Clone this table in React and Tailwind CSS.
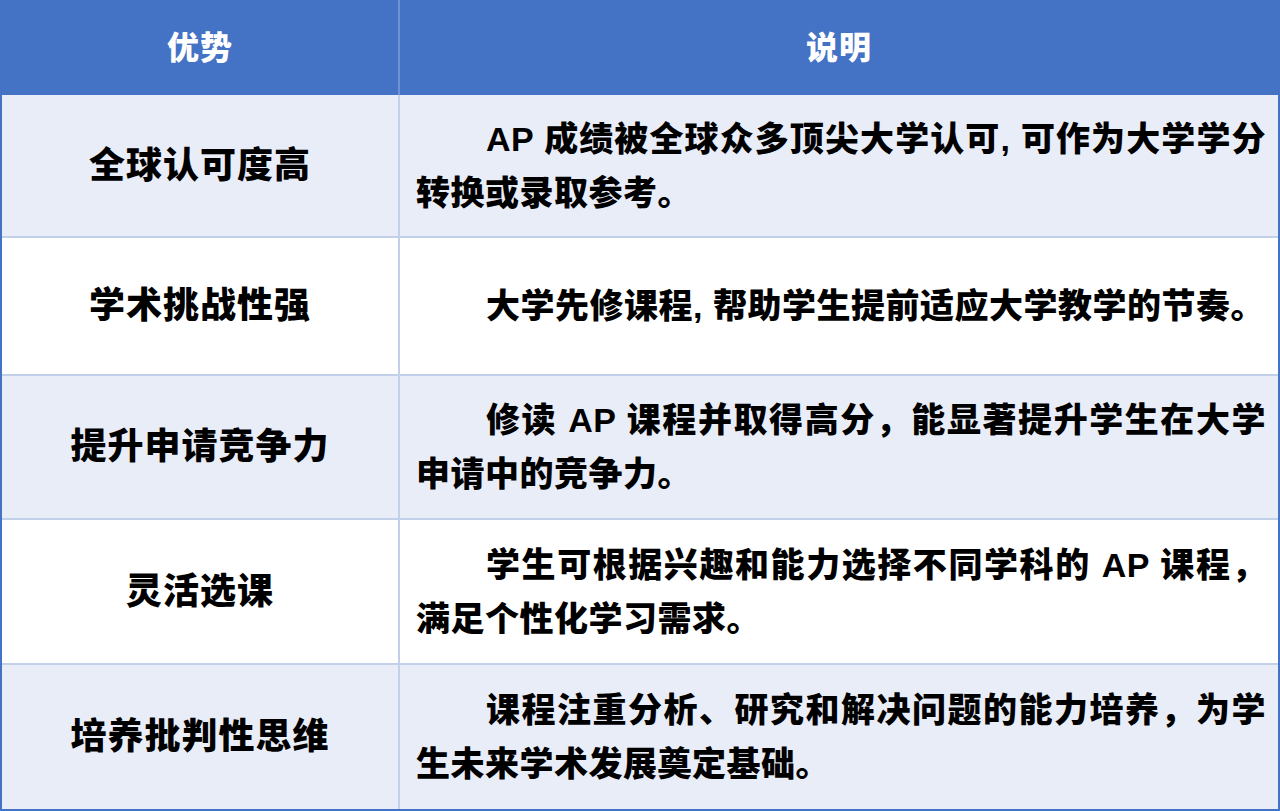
const ROWS = [
  {
    title: "全球认可度高",
    desc: "AP 成绩被全球众多顶尖大学认可, 可作为大学学分转换或录取参考。",
    h: "h-[143px]",
    bg: "bg-[#e9edf8]",
  },
  {
    title: "学术挑战性强",
    desc: "大学先修课程, 帮助学生提前适应大学教学的节奏。",
    h: "h-[138px]",
    bg: "bg-white",
    nowrap: true,
  },
  {
    title: "提升申请竞争力",
    desc: "修读 AP 课程并取得高分，能显著提升学生在大学申请中的竞争力。",
    h: "h-[144px]",
    bg: "bg-[#e9edf8]",
  },
  {
    title: "灵活选课",
    desc: "学生可根据兴趣和能力选择不同学科的 AP 课程，满足个性化学习需求。",
    h: "h-[145px]",
    bg: "bg-white",
  },
  {
    title: "培养批判性思维",
    desc: "课程注重分析、研究和解决问题的能力培养，为学生未来学术发展奠定基础。",
    h: "h-[144px]",
    bg: "bg-[#e9edf8]",
  },
];

const FONT = "font-['Liberation_Sans','Noto_Sans_CJK_SC',sans-serif]";

export default function App() {
  return (
    <div className={`w-[1280px] h-[811px] bg-white ${FONT} font-black text-black`}>
      <div className="h-full border-x-2 border-b-2 border-[#4472c4]">
        {/* Header */}
        <div className="grid grid-cols-[398px_1fr] h-[95px] bg-[#4472c4] text-white text-[32px] tracking-[1px]">
          <div className="flex items-center justify-center border-r-2 border-[#6f92d4]">
            优势
          </div>
          <div className="flex items-center justify-center">说明</div>
        </div>

        {/* Body rows */}
        {ROWS.map((row, i) => (
          <div
            key={row.title}
            className={`grid grid-cols-[398px_1fr] ${row.h} ${row.bg} ${
              i < ROWS.length - 1 ? "border-b-2 border-[#c3d0ea]" : ""
            }`}
          >
            <div className="flex items-center justify-center border-r-2 border-[#c3d0ea] text-[36px] tracking-[1px]">
              {row.title}
            </div>
            <div className="flex items-center pl-[16px] pr-[12px]">
              <p
                className={`text-[34px] leading-[54px] tracking-[0.5px] indent-[70px] text-justify ${
                  row.nowrap ? "whitespace-nowrap" : ""
                }`}
              >
                {row.desc}
              </p>
            </div>
          </div>
        ))}
      </div>
    </div>
  );
}
